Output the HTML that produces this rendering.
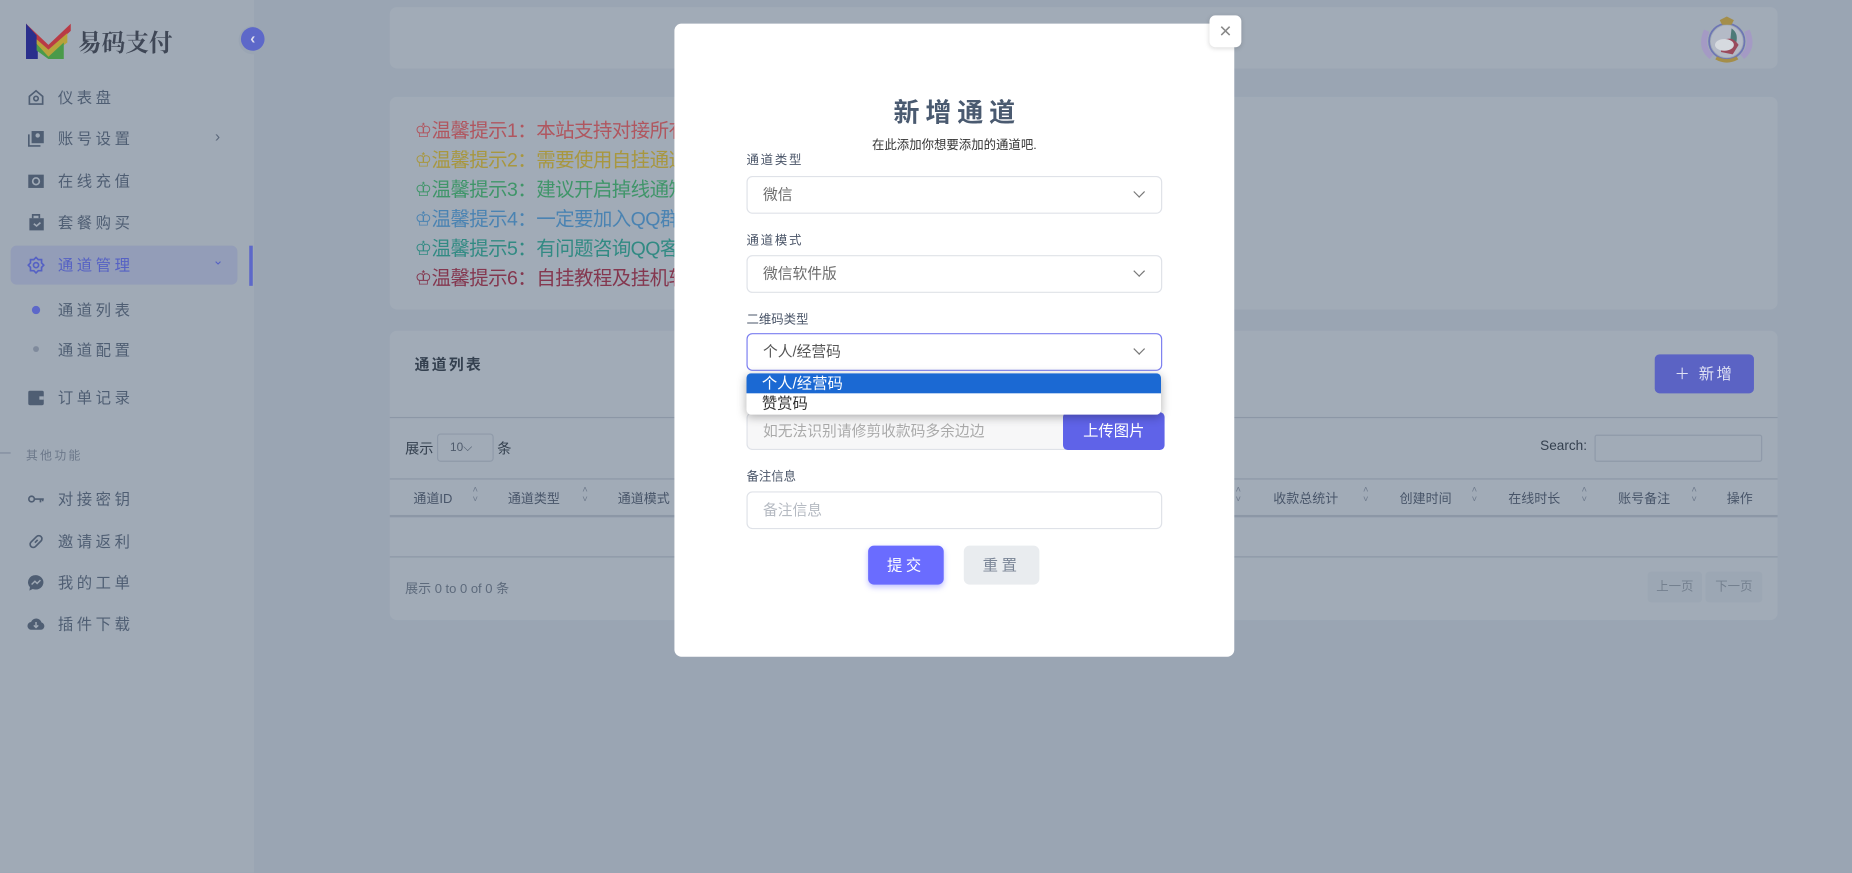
<!DOCTYPE html>
<html><head><meta charset="utf-8"><style>
*{margin:0;padding:0;box-sizing:border-box}
html,body{width:1852px;height:873px;overflow:hidden;background:#9aa5b3}
body{font-family:"Liberation Sans","Noto Sans CJK SC",sans-serif}
#w{position:absolute;left:0;top:0;width:1568px;height:739px;transform:scale(1.18112);transform-origin:0 0;background:#9aa5b3}
.a{position:absolute;white-space:nowrap}
.side{position:absolute;left:0;top:0;width:215px;height:739px;background:#a0aab6}
.mi{position:absolute;left:49px;font-size:13px;letter-spacing:3px;color:#4f5e73;line-height:16px}
.ic{position:absolute;left:23px;width:15px;height:15px}
.card{position:absolute;left:330px;width:1175px;background:#a1abb7;border-radius:6px}
.tip{position:absolute;left:351px;font-size:16.5px;line-height:20px;letter-spacing:-0.5px}
.th{position:absolute;top:414px;font-size:11px;color:#485569}
.sa{position:absolute;top:411px;font-size:8px;line-height:8px;color:#6e7a8c}
.modal{position:absolute;left:571px;top:20px;width:474px;height:536px;background:#fff;border-radius:6px}
.lab{position:absolute;left:61px;font-size:10.5px;color:#4a5568;letter-spacing:1.5px}
.sel{position:absolute;left:61px;width:352px;height:32px;border:1px solid #dfe2e8;border-radius:5px;font-size:12.5px;color:#6b6b6b;padding-left:13px;line-height:30px}
.chev{position:absolute;right:15px;top:9px;width:7px;height:7px;border-right:1.2px solid #777;border-bottom:1.2px solid #777;transform:rotate(45deg)}
</style></head><body><div id="w">
<div class="side">
 <svg class="a" style="left:22px;top:18px" width="38" height="32" viewBox="0 0 38 32"><path d="M0 2 L0 32 L10 32 L10 14 Z" fill="#2a2f8c"/><path d="M0 2 L19 20 L38 2 L38 8 L19 26 L0 8Z" fill="#b93a45"/><path d="M3 10 L19 24 L35 10 L35 18 L19 30 L3 18Z" fill="#b8a23c"/><path d="M8 18 L19 30 L32 18 L32 32 L26 32 L19 32 L8 24Z" fill="#4a9a4a"/><path d="M0 2 L0 32 L9 32 L9 12Z" fill="#2a2f8c"/></svg>
 <div class="a" style="left:66px;top:20px;font-size:20px;font-weight:bold;color:#3f4756;font-family:'Noto Serif CJK SC',serif">易码支付</div>
 <div class="a" style="left:202px;top:22px;width:24px;height:24px;border-radius:50%;background:#9aa5b3"></div>
 <div class="a" style="left:204px;top:23px;width:20px;height:20px;border-radius:50%;background:#5d68c9;color:#dde;font-size:13px;line-height:20px;text-align:center;font-weight:bold">‹</div>
 <svg class="ic" style="top:75px" viewBox="0 0 16 16" fill="none" stroke="#4f5e73" stroke-width="1.5"><path d="M2 7 L8 2 L14 7 V14 H2Z"/><circle cx="8" cy="9" r="2"/></svg><div class="mi" style="top:75px">仪表盘</div>
 <svg class="ic" style="top:110px" viewBox="0 0 16 16"><rect x="4" y="1" width="11" height="11" fill="#4f5e73"/><path d="M1.5 4 V14.5 H12" stroke="#4f5e73" stroke-width="1.5" fill="none"/><circle cx="9.5" cy="5" r="2" fill="#a0aab6"/></svg><div class="mi" style="top:110px">账号设置</div><div class="a" style="left:182px;top:108px;color:#5a677a;font-size:13px">›</div>
 <svg class="ic" style="top:146px" viewBox="0 0 16 16"><rect x="1" y="2" width="14" height="12" fill="#4f5e73"/><circle cx="8" cy="8" r="3" fill="none" stroke="#a0aab6" stroke-width="1.5"/></svg><div class="mi" style="top:146px">在线充值</div>
 <svg class="ic" style="top:181px" viewBox="0 0 16 16"><rect x="2" y="4" width="13" height="11" fill="#4f5e73"/><path d="M5 4 V1 H11 V4" stroke="#4f5e73" stroke-width="1.5" fill="none"/><path d="M6 9 L8.5 11 L12 8" stroke="#a0aab6" stroke-width="1.5" fill="none"/></svg><div class="mi" style="top:181px">套餐购买</div>
 <div class="a" style="left:9px;top:208px;width:192px;height:33px;border-radius:5px;background:#939db8"></div>
 <svg class="ic" style="top:217px" viewBox="0 0 16 16" fill="none" stroke="#5561c4" stroke-width="1.5"><path d="M8 1 L10 3 L13 3 L13 6 L15 8 L13 10 L13 13 L10 13 L8 15 L6 13 L3 13 L3 10 L1 8 L3 6 L3 3 L6 3Z"/><circle cx="8" cy="8" r="2.3"/></svg><div class="mi" style="top:217px;color:#5561c4">通道管理</div><div class="a" style="left:180px;top:214px;color:#5561c4;font-size:11px">⌄</div>
 <div class="a" style="left:211px;top:208px;width:3px;height:34px;background:#5d68c9"></div>
 <div class="a" style="left:27px;top:259px;width:7px;height:7px;border-radius:50%;background:#5d68c9"></div><div class="mi" style="top:255px">通道列表</div>
 <div class="a" style="left:28px;top:293px;width:5px;height:5px;border-radius:50%;background:#7f8a9c"></div><div class="mi" style="top:289px">通道配置</div>
 <svg class="ic" style="top:329px" viewBox="0 0 16 16"><rect x="1" y="2" width="14" height="13" rx="1.5" fill="#4f5e73"/><rect x="11" y="7" width="4" height="3" fill="#a0aab6"/></svg><div class="mi" style="top:329px">订单记录</div>
 <div class="a" style="left:0;top:383px;width:9px;height:1px;background:#7f8a9c"></div><div class="a" style="left:22px;top:377px;font-size:10px;letter-spacing:2px;color:#6c788a">其他功能</div>
 <svg class="ic" style="top:415px" viewBox="0 0 16 16" fill="none" stroke="#4f5e73" stroke-width="1.5"><circle cx="4" cy="8" r="2.5"/><path d="M6.5 8 H15 M12 8 V11 M14 8 V10"/></svg><div class="mi" style="top:415px">对接密钥</div>
 <svg class="ic" style="top:451px" viewBox="0 0 16 16" fill="none" stroke="#4f5e73" stroke-width="1.5"><path d="M7 9 L9.5 6.5 M6 6 L8.5 3.5 A2.5 2.5 0 0 1 12.5 7.5 L10 10 M10 10 M6 6 L3.5 8.5 A2.5 2.5 0 0 0 7.5 12.5 L10 10"/></svg><div class="mi" style="top:451px">邀请返利</div>
 <svg class="ic" style="top:486px" viewBox="0 0 16 16"><path d="M8 1 A7 6.5 0 1 1 5 13.5 L2 15 L2.5 11.8 A7 6.5 0 0 1 8 1Z" fill="#4f5e73"/><path d="M4 9.5 L7 6.5 L9 8.5 L12 5.5" stroke="#a0aab6" stroke-width="1.3" fill="none"/></svg><div class="mi" style="top:486px">我的工单</div>
 <svg class="ic" style="top:521px" viewBox="0 0 16 16"><path d="M4 13 A3.5 3.5 0 0 1 3.5 6 A5 5 0 0 1 13 6.5 A3.3 3.3 0 0 1 12.5 13Z" fill="#4f5e73"/><path d="M8 6 V11 M6 9 L8 11 L10 9" stroke="#a0aab6" stroke-width="1.3" fill="none"/></svg><div class="mi" style="top:521px">插件下载</div>
</div>

<div class="card" style="top:6px;height:52px"></div>
<svg class="a" style="left:1437px;top:12px" width="50" height="44" viewBox="0 0 50 44"><path d="M8 14 Q2 28 12 36 M42 14 Q48 28 38 36" stroke="#a49ac4" stroke-width="5" fill="none"/><circle cx="25" cy="23" r="15" fill="none" stroke="#6e76b4" stroke-width="1.5"/><circle cx="25" cy="23" r="13.5" fill="#b4bac6"/><path d="M29 12 Q35 16 33 24 L28 22Z" fill="#4d7a78"/><path d="M22 22 Q30 18 35 26 L30 34 L20 32Z" fill="#9a4a5c"/><ellipse cx="23" cy="26" rx="8" ry="5" fill="#d6dadf"/><path d="M19 5 L25 2 L31 5 L29 9 L21 9Z" fill="#a48e4a"/><path d="M16 37 Q25 42 34 37" stroke="#a48e4a" stroke-width="3" fill="none"/></svg>

<div class="card" style="top:82px;height:180px"></div>
<div class="tip" style="top:101px;color:#b0565f">♔温馨提示1：本站支持对接所有</div>
<div class="tip" style="top:126px;color:#a8973f">♔温馨提示2：需要使用自挂通道</div>
<div class="tip" style="top:151px;color:#3f9569">♔温馨提示3：建议开启掉线通知</div>
<div class="tip" style="top:176px;color:#4a83b2">♔温馨提示4：一定要加入QQ群</div>
<div class="tip" style="top:201px;color:#318a83">♔温馨提示5：有问题咨询QQ客</div>
<div class="tip" style="top:226px;color:#84374f">♔温馨提示6：自挂教程及挂机软</div>

<div class="card" style="top:280px;height:245px"></div>
<div class="a" style="left:351px;top:298px;font-size:12.5px;font-weight:bold;color:#34404f;letter-spacing:2px">通道列表</div>
<div class="a" style="left:1401px;top:300px;width:84px;height:33px;border-radius:4px;background:#5b63c4;color:#dfe1f4;font-size:13px;line-height:33px;text-align:center;letter-spacing:2px">＋ 新增</div>
<div class="a" style="left:330px;top:353px;width:1175px;height:1px;background:#8c97a6"></div>
<div class="a" style="left:343px;top:371px;font-size:12px;color:#34404f">展示</div>
<div class="a" style="left:370px;top:367px;width:48px;height:24px;border:1px solid #8f9aa9;border-radius:3px;font-size:10px;color:#4f5b6c;padding:6px 0 0 10px">10⌵</div>
<div class="a" style="left:421px;top:371px;font-size:12px;color:#34404f">条</div>
<div class="a" style="left:1304px;top:372px;font-size:11.5px;color:#34404f">Search:</div>
<div class="a" style="left:1350px;top:368px;width:142px;height:23px;border:1px solid #8f9aa9;border-radius:2px"></div>
<div class="a" style="left:330px;top:405px;width:1175px;height:1px;background:#8c97a6"></div>
<div class="th" style="left:350px">通道ID</div><div class="sa" style="left:400px">˄<br>˅</div>
<div class="th" style="left:430px">通道类型</div><div class="sa" style="left:493px">˄<br>˅</div>
<div class="th" style="left:523px">通道模式</div>
<div class="sa" style="left:1046px">˄<br>˅</div>
<div class="th" style="left:1078px">收款总统计</div><div class="sa" style="left:1154px">˄<br>˅</div>
<div class="th" style="left:1185px">创建时间</div><div class="sa" style="left:1246px">˄<br>˅</div>
<div class="th" style="left:1277px">在线时长</div><div class="sa" style="left:1339px">˄<br>˅</div>
<div class="th" style="left:1370px">账号备注</div><div class="sa" style="left:1432px">˄<br>˅</div>
<div class="th" style="left:1462px">操作</div>
<div class="a" style="left:330px;top:436px;width:1175px;height:2px;background:#8c97a6"></div>
<div class="a" style="left:330px;top:471px;width:1175px;height:1px;background:#8c97a6"></div>
<div class="a" style="left:343px;top:490px;font-size:11px;color:#5d6a7c">展示 0 to 0 of 0 条</div>
<div class="a" style="left:1395px;top:484px;width:46px;height:26px;background:#9ca7b4;border-radius:3px;font-size:10.5px;color:#74808f;line-height:26px;text-align:center">上一页</div>
<div class="a" style="left:1444px;top:484px;width:48px;height:26px;background:#9ca7b4;border-radius:3px;font-size:10.5px;color:#74808f;line-height:26px;text-align:center">下一页</div>

<div class="modal">
 <div class="a" style="left:0;width:474px;top:58px;text-align:center;font-size:22px;font-weight:bold;color:#4a5a70;letter-spacing:5px;padding-left:5px">新增通道</div>
 <div class="a" style="left:0;width:474px;top:95px;text-align:center;font-size:10.5px;color:#333">在此添加你想要添加的通道吧.</div>
 <div class="lab" style="top:108px">通道类型</div>
 <div class="sel" style="top:129px">微信<div class="chev"></div></div>
 <div class="lab" style="top:176px">通道模式</div>
 <div class="sel" style="top:196px">微信软件版<div class="chev"></div></div>
 <div class="lab" style="top:243px;letter-spacing:0">二维码类型</div>
 <div class="sel" style="top:262px;border-color:#7b7ef0;color:#555">个人/经营码<div class="chev"></div></div>
 <div class="sel" style="top:329px;width:290px;color:#aaa;border-radius:5px 0 0 5px;background:#f7f7f8">如无法识别请修剪收款码多余边边</div>
 <div class="a" style="left:329px;top:329px;width:86px;height:32px;border-radius:4px;background:#5f63e8;color:#fff;font-size:13px;line-height:32px;text-align:center">上传图片</div>
 <div class="a" style="left:61px;top:296px;width:351px;height:35px;background:#fff;border-radius:4px;box-shadow:0 2px 8px rgba(0,0,0,.3);overflow:hidden">
  <div style="height:17px;background:#1b69d3;color:#fff;font-size:13px;line-height:17px;padding-left:13px">个人/经营码</div>
  <div style="height:18px;color:#333;font-size:13px;line-height:17px;padding-left:13px">赞赏码</div>
 </div>
 <div class="lab" style="top:376px;letter-spacing:0">备注信息</div>
 <div class="sel" style="top:396px;color:#b5bac2">备注信息</div>
 <div class="a" style="left:164px;top:442px;width:64px;height:33px;border-radius:5px;background:#6a6cff;color:#fff;font-size:13px;line-height:33px;text-align:center;letter-spacing:3px;box-shadow:0 2px 5px rgba(106,108,255,.4)">提交</div>
 <div class="a" style="left:245px;top:442px;width:64px;height:33px;border-radius:5px;background:#e9ecef;color:#7a8596;font-size:13px;line-height:33px;text-align:center;letter-spacing:3px">重置</div>
</div>
<div class="a" style="left:1024px;top:13px;width:27px;height:27px;border-radius:5px;background:#fff;box-shadow:0 1px 4px rgba(0,0,0,.15);color:#888;font-size:18px;line-height:26px;text-align:center">×</div>
</div></body></html>
